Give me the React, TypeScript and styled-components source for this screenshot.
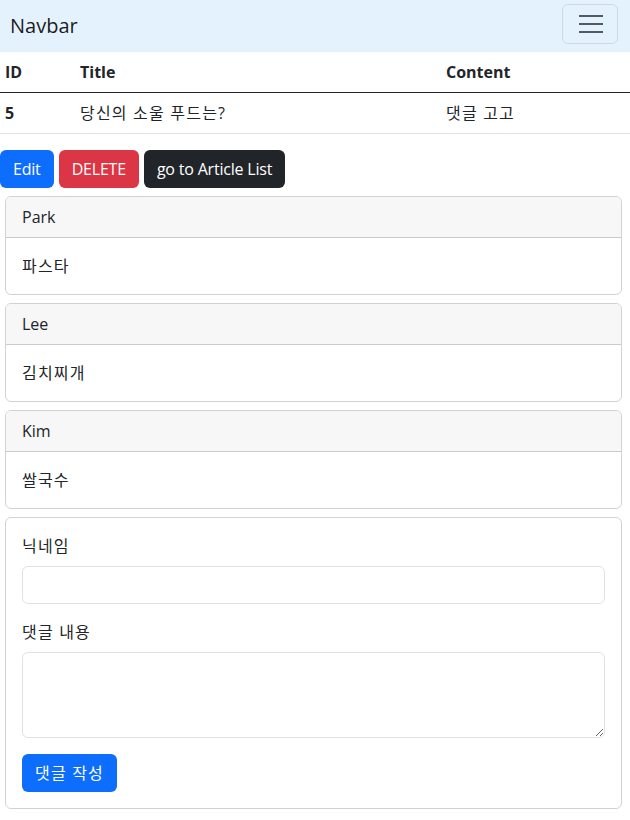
import styled, { createGlobalStyle } from 'styled-components';

const GlobalStyle = createGlobalStyle`
  * { box-sizing: border-box; }
  body {
    margin: 0;
    font-family: "Open Sans", "Noto Sans CJK KR", sans-serif;
    font-size: 16px;
    line-height: 1.5;
    color: #212529;
    background: #fff;
  }
`;

const Nav = styled.nav`
  height: 52px;
  background: #e3f2fd;
  display: flex;
  align-items: flex-start;
  justify-content: space-between;
  padding: 4px 12px 0 10px;
`;

const Brand = styled.span`
  font-size: 20px;
  line-height: 44px;
  color: rgba(0, 0, 0, 0.9);
`;

const Toggler = styled.button`
  width: 56px;
  height: 40px;
  background: transparent;
  border: 1px solid rgba(0, 0, 0, 0.1);
  border-radius: 6px;
  display: flex;
  align-items: center;
  justify-content: center;
  padding: 0;
`;

const Table = styled.table`
  width: 100%;
  border-collapse: collapse;
  margin-bottom: 16px;
`;

const Th = styled.th<{ w?: string }>`
  text-align: left;
  font-weight: 700;
  padding: 8px 5px;
  width: ${(p) => p.w ?? 'auto'};
  border-bottom: 1px solid #212529;
`;

const Td = styled.td<{ bold?: boolean }>`
  padding: 8px 5px;
  font-weight: ${(p) => (p.bold ? 700 : 400)};
  border-bottom: 1px solid #dee2e6;
`;

// Korean text in the reference is set a little wider
const Ko = styled.span`
  letter-spacing: 1.2px;
`;

const ButtonRow = styled.div`
  display: flex;
  gap: 5px;
  margin-bottom: 8px;
`;

const Button = styled.button<{ variant: 'primary' | 'danger' | 'dark' }>`
  font-family: inherit;
  font-size: 16px;
  line-height: 24px;
  padding: 6px 12px;
  border: 1px solid transparent;
  border-radius: 6px;
  color: #fff;
  letter-spacing: -0.2px;
  background: ${(p) =>
    p.variant === 'primary' ? '#0d6efd' : p.variant === 'danger' ? '#dc3545' : '#212529'};
`;

const Card = styled.div`
  margin: 0 8px 8px 5px;
  border: 1px solid rgba(0, 0, 0, 0.175);
  border-radius: 6px;
  overflow: hidden;
`;

const CardHeader = styled.div`
  padding: 8px 16px;
  background: #f7f7f7;
  border-bottom: 1px solid rgba(0, 0, 0, 0.175);
`;

const CardBody = styled.div`
  padding: 16px;
`;

const Field = styled.div`
  margin-bottom: 16px;
`;

const Label = styled.label`
  display: block;
  margin-bottom: 8px;
`;

const Input = styled.input`
  display: block;
  width: 100%;
  height: 38px;
  padding: 6px 12px;
  font-family: inherit;
  font-size: 16px;
  border: 1px solid #dee2e6;
  border-radius: 6px;
`;

const TextArea = styled.textarea`
  display: block;
  width: 100%;
  height: 86px;
  padding: 6px 12px;
  font-family: inherit;
  font-size: 16px;
  border: 1px solid #dee2e6;
  border-radius: 6px;
`;

const comments = [
  { nickname: 'Park', body: '파스타' },
  { nickname: 'Lee', body: '김치찌개' },
  { nickname: 'Kim', body: '쌀국수' },
];

export default function App() {
  return (
    <>
      <GlobalStyle />
      <Nav>
        <Brand>Navbar</Brand>
        <Toggler>
          <svg width="30" height="30" viewBox="0 0 30 30">
            <path
              d="M4 7h24M4 15h24M4 23h24"
              stroke="rgba(33,37,41,0.75)"
              strokeWidth="2"
            />
          </svg>
        </Toggler>
      </Nav>
      <Table>
        <thead>
          <tr>
            <Th w="75px">ID</Th>
            <Th w="366px">Title</Th>
            <Th>Content</Th>
          </tr>
        </thead>
        <tbody>
          <tr>
            <Td bold>5</Td>
            <Td>
              <Ko>당신의 소울 푸드는?</Ko>
            </Td>
            <Td>
              <Ko>댓글 고고</Ko>
            </Td>
          </tr>
        </tbody>
      </Table>
      <ButtonRow>
        <Button variant="primary">Edit</Button>
        <Button variant="danger">DELETE</Button>
        <Button variant="dark">go to Article List</Button>
      </ButtonRow>
      {comments.map((c) => (
        <Card key={c.nickname}>
          <CardHeader>{c.nickname}</CardHeader>
          <CardBody>
            <Ko>{c.body}</Ko>
          </CardBody>
        </Card>
      ))}
      <Card>
        <CardBody>
          <Field>
            <Label>
              <Ko>닉네임</Ko>
            </Label>
            <Input type="text" />
          </Field>
          <Field>
            <Label>
              <Ko>댓글 내용</Ko>
            </Label>
            <TextArea rows={3} />
          </Field>
          <Button variant="primary">
            <Ko>댓글 작성</Ko>
          </Button>
        </CardBody>
      </Card>
    </>
  );
}
